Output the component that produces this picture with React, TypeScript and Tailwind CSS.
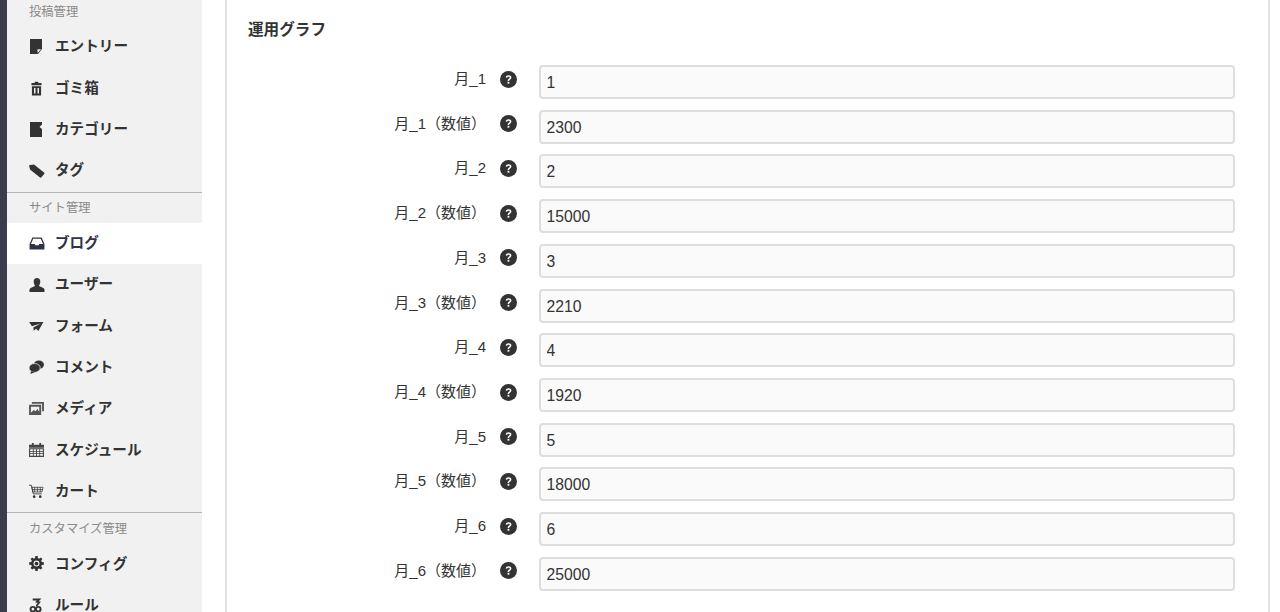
import React from "react";

const font = { fontFamily: '"Liberation Sans","Noto Sans CJK JP",sans-serif' };

const Doc = () => (
  <svg viewBox="0 0 12 15" className="w-[12px] h-[15px] ml-[1px]" fill="currentColor"><path d="M0 0h12v10l-4 5H0z" /><path d="M7.500 14l3.500-3.800H7.500z" fill="#f1f1f1" /></svg>
);
const Trash = () => (
  <svg viewBox="0 0 12 15" className="w-[11px] h-[15px] ml-[2px]" fill="currentColor"><path d="M4 0h4v1.500h3.500V4H.5V1.500H4z" /><path fillRule="evenodd" d="M1 5h10v10H1zM3.300 7v6h1.600V7zM7.100 7v6h1.600V7z" /></svg>
);
const Folder = () => (
  <svg viewBox="0 0 12 15" className="w-[12px] h-[15px] ml-[1px]" fill="currentColor"><path d="M0 0h12v2.500L9.500 5 12 7v8H0z" /></svg>
);
const Tag = () => (
  <svg viewBox="0 0 16 14" className="w-[16px] h-[14px]" fill="currentColor"><path d="M0 1.200L5 .5 15 8.500a1 1 0 0 1 .2 1.400L12.400 13.300a1 1 0 0 1-1.400.1L1 5.500z" /></svg>
);
const Inbox = () => (
  <svg viewBox="0 0 16 14" className="w-[16px] h-[13px]" fill="currentColor"><path fillRule="evenodd" d="M3 .5h10l3 7V13.500H0V7.500zM3.900 1.800L1.500 7.500h4l.8 1.500h3.400l.8-1.500h4L12.100 1.800z" /></svg>
);
const User = () => (
  <svg viewBox="0 0 16 14" className="w-[16px] h-[14px]" fill="currentColor"><path d="M8 0c2 0 3.300 1.500 3.300 3.500S10.200 7 10 8c2 1 5 1.500 5.500 3.500V14H.5v-2.500C1 9.500 4 9 6 8c-.2-1-1.300-2.500-1.300-4.500S6 0 8 0z" /></svg>
);
const Plane = () => (
  <svg viewBox="0 0 16 12" className="w-[15px] h-[11px]" fill="currentColor"><path d="M0 1h15.500L10 11 7.500 8.500 5 10.500l-.5-3.500L13 2.500 3 5.800z" /></svg>
);
const Comments = () => (
  <svg viewBox="0 0 16 15" className="w-[15px] h-[14px]" fill="currentColor"><ellipse cx="10.500" cy="5" rx="5.500" ry="4.500" /><ellipse cx="6" cy="8.500" rx="6" ry="4.800" stroke="#f1f1f1" strokeWidth=".8" /><path d="M2 12l-.5 3L6 13z" /></svg>
);
const Media = () => (
  <svg viewBox="0 0 16 14" className="w-[15px] h-[13px]" fill="#555"><path d="M3 0h13v10h-2V2H3z" /><path fillRule="evenodd" d="M0 3h13v11H0zM2 5v6.500l3-3 2 1.500 2-2.500 2 3V5z" /></svg>
);
const Calendar = () => (
  <svg viewBox="0 0 16 15" className="w-[15px] h-[14px]" fill="#444"><path d="M3 0h2v2h6V0h2v2h3v3H0V2h3z" /><path fillRule="evenodd" d="M0 5.500h16V15H0zM1.200 6.700v1.800h2.900V6.700zM5 6.700v1.800h2.500V6.700zM8.500 6.700v1.800H11V6.700zM11.900 6.700v1.800h2.900V6.700zM1.200 9.300v1.800h2.900V9.300zM5 9.300v1.800h2.500V9.300zM8.500 9.300v1.800H11V9.300zM11.900 9.300v1.800h2.900V9.300zM1.200 11.900v1.800h2.900v-1.800zM5 11.900v1.800h2.500v-1.800zM8.500 11.900v1.800H11v-1.800zM11.900 11.900v1.800h2.900v-1.800z" /></svg>
);
const Cart = () => (
  <svg viewBox="0 0 16 15" className="w-[15px] h-[15px]" fill="none" stroke="currentColor"><path d="M0 .8h2.500L4.500 10h9" strokeWidth=".9" /><path d="M3 3h12l-1.200 5H4.200zM6 3v5M9 3v5M12 3v5M3.500 5.500h11" strokeWidth=".8" /><circle cx="5.500" cy="13" r="1.400" fill="currentColor" stroke="none" /><circle cx="12" cy="13" r="1.400" fill="currentColor" stroke="none" /></svg>
);
const Gear = () => (
  <svg viewBox="0 0 16 16" className="w-[15px] h-[15px]" fill="currentColor"><path fillRule="evenodd" d="M6.800 0h2.400l.3 2.200 1.300.6 1.800-1.300 1.700 1.700-1.300 1.800.6 1.300 2.200.3v2.800l-2.200.3-.6 1.300 1.300 1.800-1.700 1.700-1.800-1.300-1.300.6-.3 2.200H6.800l-.3-2.200-1.300-.6-1.800 1.300-1.700-1.700 1.300-1.800-.6-1.300L.2 9.400V6.600l2.200-.3.6-1.300-1.300-1.800 1.700-1.700 1.800 1.300 1.300-.6zM8 4.800a3.200 3.200 0 1 0 0 6.400 3.200 3.200 0 0 0 0-6.400z" /><circle cx="8" cy="8" r="2" /></svg>
);
const Rule = () => (
  <svg viewBox="0 0 14 15" className="w-[13px] h-[15px]" fill="none" stroke="currentColor" strokeWidth="2"><path d="M4 1h7L8.500 3.500 11 4 8 8" /><circle cx="4.200" cy="11.500" r="2.500" /><circle cx="10" cy="11.500" r="2.500" /></svg>
);

type Item = { label: string; icon: React.ReactNode; active?: boolean };

const groups: { title: string; items: Item[] }[] = [
  {
    title: "投稿管理",
    items: [
      { label: "エントリー", icon: <Doc /> },
      { label: "ゴミ箱", icon: <Trash /> },
      { label: "カテゴリー", icon: <Folder /> },
      { label: "タグ", icon: <Tag /> },
    ],
  },
  {
    title: "サイト管理",
    items: [
      { label: "ブログ", icon: <Inbox />, active: true },
      { label: "ユーザー", icon: <User /> },
      { label: "フォーム", icon: <Plane /> },
      { label: "コメント", icon: <Comments /> },
      { label: "メディア", icon: <Media /> },
      { label: "スケジュール", icon: <Calendar /> },
      { label: "カート", icon: <Cart /> },
    ],
  },
  {
    title: "カスタマイズ管理",
    items: [
      { label: "コンフィグ", icon: <Gear /> },
      { label: "ルール", icon: <Rule /> },
    ],
  },
];

const fields: [string, string][] = [
  ["月_1", "1"],
  ["月_1（数値）", "2300"],
  ["月_2", "2"],
  ["月_2（数値）", "15000"],
  ["月_3", "3"],
  ["月_3（数値）", "2210"],
  ["月_4", "4"],
  ["月_4（数値）", "1920"],
  ["月_5", "5"],
  ["月_5（数値）", "18000"],
  ["月_6", "6"],
  ["月_6（数値）", "25000"],
];

const Help = () => (
  <svg viewBox="0 0 16 16" className="w-[17px] h-[17px] shrink-0">
    <circle cx="8" cy="8" r="8" fill="#333" />
    <path d="M5.400 6.200C5.500 4.700 6.600 4 8 4c1.500 0 2.700.8 2.700 2.200 0 1.100-.7 1.600-1.400 2-.5.3-.7.6-.7 1.200H7.200c0-1 .3-1.600 1.100-2.100.5-.3.9-.6.9-1.100 0-.6-.5-.9-1.200-.9-.7 0-1.200.4-1.300 1z" fill="#fff" />
    <rect x="7.100" y="10.200" width="1.700" height="1.700" fill="#fff" />
  </svg>
);

export default function App() {
  return (
    <div className="flex h-[612px] w-full overflow-hidden bg-white text-[#333]" style={font}>
      <div className="w-[7px] shrink-0 bg-[#3a3d4d]" />
      <nav className="w-[195px] shrink-0 bg-[#f1f1f1] -mt-[4px]">
        {groups.map((g, i) => (
          <div key={g.title} className={i > 0 ? "border-t border-[#b5b5b5]" : ""}>
            <div className="h-[30px] pl-[22px] pt-[2px] flex items-center text-[12.3px] text-[#8a8a8a]">{g.title}</div>
            {g.items.map((it) => (
              <div
                key={it.label}
                className={`h-[41.4px] flex items-center font-bold text-[14.6px] ${it.active ? "bg-white text-[#2f3345]" : "text-[#333]"}`}
              >
                <span className="w-[48px] pl-[22px] shrink-0 flex items-center">{it.icon}</span>
                <span className="pt-[1px]">{it.label}</span>
              </div>
            ))}
          </div>
        ))}
      </nav>
      <main className="ml-[23px] w-[1045px] h-[640px] shrink-0 border-x-2 border-[#e2e2e2] pl-[21px] -mt-[4px]">
        <h2 className="h-[69px] pt-[24px] font-bold text-[15.6px] leading-[20px]">運用グラフ</h2>
        <div className="flex flex-col gap-[10.73px]">
          {fields.map(([label, value]) => (
            <div key={label} className="flex items-start">
              <label className="w-[238px] text-right text-[15px] leading-[20px] pt-[4px] -mr-px">{label}</label>
              <span className="pt-[5.5px] ml-[15px]"><Help /></span>
              <input
                readOnly
                value={value}
                className="ml-[22px] w-[696px] h-[34px] rounded-[4px] border-2 border-[#dedede] bg-[#fafafa] px-[5.500px] pt-[2px] text-[15.7px] text-[#333] outline-none"
              />
            </div>
          ))}
        </div>
      </main>
    </div>
  );
}
